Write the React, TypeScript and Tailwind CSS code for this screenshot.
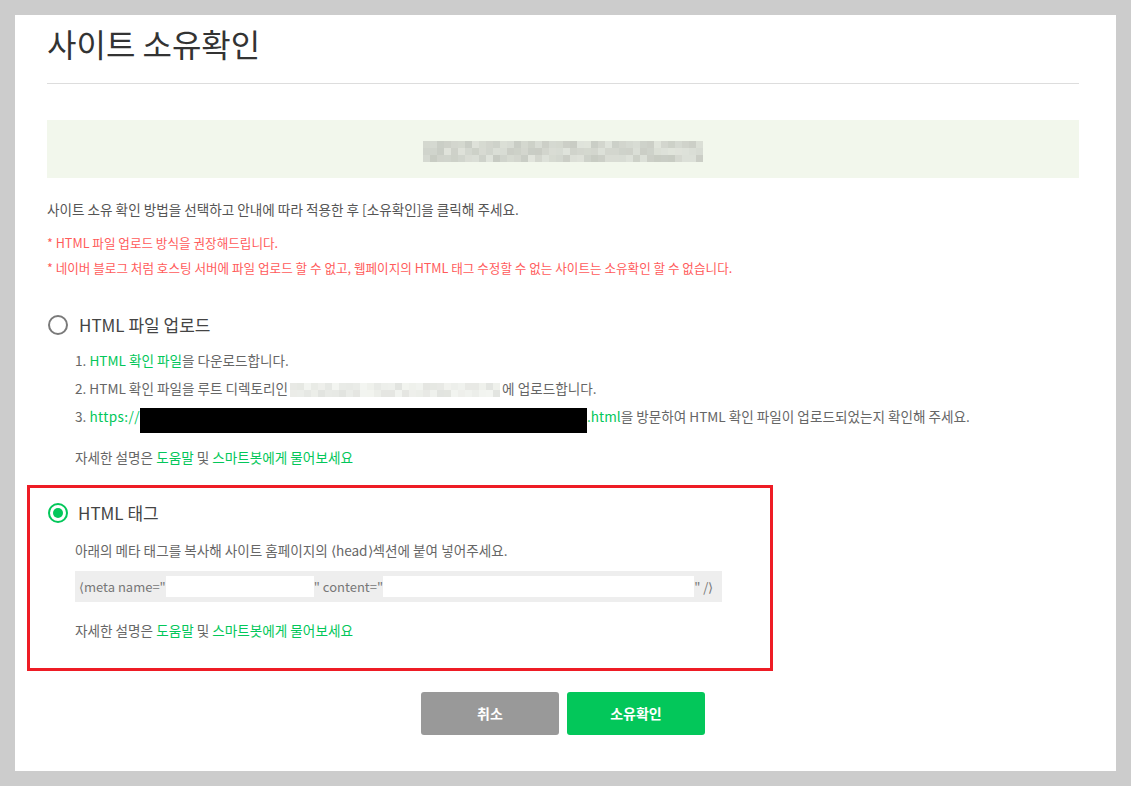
import React, { FC } from 'react'

const KR = { fontFamily: '"Noto Sans CJK KR", "Noto Sans", sans-serif' }

// pixelated mosaic standing in for blurred-out text
const Mosaic: FC<{ cols: number; rows: number; cell: number; base: number; spread: number; seed: number }> = ({
  cols,
  rows,
  cell,
  base,
  spread,
  seed
}) => {
  let s = seed
  const rand = () => {
    s = (s * 9301 + 49297) % 233280
    return s / 233280
  }
  const cells: number[][] = []
  for (let r = 0; r < rows; r++) {
    const row: number[] = []
    for (let c = 0; c < cols; c++) row.push(Math.round(base + (rand() - 0.5) * spread))
    cells.push(row)
  }
  return (
    <span className="inline-flex flex-col align-middle">
      {cells.map((row, r) => (
        <span key={r} className="flex">
          {row.map((v, c) => (
            <span
              key={c}
              style={{ width: cell, height: cell, backgroundColor: `rgb(${v},${v + 3},${v - 4})` }}
            />
          ))}
        </span>
      ))}
    </span>
  )
}

const Radio: FC<{ checked?: boolean }> = ({ checked }) =>
  checked ? (
    <span className="w-[20px] h-[20px] rounded-full border-2 border-[#03c75a] flex items-center justify-center">
      <span className="w-[10px] h-[10px] rounded-full bg-[#03c75a]" />
    </span>
  ) : (
    <span className="w-[20px] h-[20px] rounded-full border-2 border-[#7a7a7a]" />
  )

const Help: FC = () => (
  <p className="text-[13.6px] leading-[20px] text-[#666]">
    자세한 설명은 <span className="text-[#03c75a]">도움말</span> 및{' '}
    <span className="text-[#03c75a]">스마트봇에게 물어보세요</span>
  </p>
)

const App: FC = () => {
  return (
    <div className="min-h-screen bg-[#cccccc] p-[15px]" style={KR}>
      <div className="bg-white h-[756px] pt-[8px] pl-[32px] pr-[37px]">
        <h1 className="text-[32px] leading-[40px] text-[#333]">사이트 소유확인</h1>
        <div className="mt-[20px] h-px bg-[#dddddd]" />

        <div className="mt-[36px] h-[58px] bg-[#f2f7ec] flex items-center justify-center">
          <span className="opacity-70">
            <Mosaic cols={40} rows={3} cell={7} base={200} spread={36} seed={7} />
          </span>
        </div>

        <p className="mt-[21px] text-[13.6px] leading-[20px] text-[#555]">
          사이트 소유 확인 방법을 선택하고 안내에 따라 적용한 후 [소유확인]을 클릭해 주세요.
        </p>
        <div className="mt-[11px] text-[12.6px] leading-[25px] text-[#ff5b5b]">
          <p>* HTML 파일 업로드 방식을 권장해드립니다.</p>
          <p>* 네이버 블로그 처럼 호스팅 서버에 파일 업로드 할 수 없고, 웹페이지의 HTML 태그 수정할 수 없는 사이트는 소유확인 할 수 없습니다.</p>
        </div>

        <div className="mt-[33px] flex items-center gap-[11px] h-[24px] pl-px">
          <Radio />
          <span className="text-[17px] text-[#444]">HTML 파일 업로드</span>
        </div>
        <ol className="mt-[9px] pl-[28px] text-[13.6px] leading-[28px] text-[#666]">
          <li>
            1. <span className="text-[#03c75a]">HTML 확인 파일</span>을 다운로드합니다.
          </li>
          <li className="flex items-center h-[28px]">
            <span>2. HTML 확인 파일을 루트 디렉토리인</span>
            <span className="mx-[2px] opacity-60">
              <Mosaic cols={30} rows={2} cell={7} base={222} spread={30} seed={3} />
            </span>
            <span>에 업로드합니다.</span>
          </li>
          <li className="flex items-start h-[28px] whitespace-nowrap">
            <span>
              3. <span className="text-[#03c75a] tracking-[0.4px]">https://</span>
            </span>
            <span className="shrink-0 w-[447px] h-[25px] bg-black mt-[6px]" />
            <span>
              <span className="text-[#03c75a]">.html</span>을 방문하여 HTML 확인 파일이 업로드되었는지 확인해 주세요.
            </span>
          </li>
        </ol>
        <div className="mt-[17px] pl-[28px]">
          <Help />
        </div>

        <div className="mt-[18px] ml-[-20px] w-[746px] h-[186px] border-[3px] border-[#ee1c25] pt-[13px] pl-[18px]">
          <div className="flex items-center gap-[10px] h-[24px]">
            <Radio checked />
            <span className="text-[17px] text-[#444]">HTML 태그</span>
          </div>
          <div className="pl-[27px]">
            <p className="mt-[15px] text-[13.6px] leading-[20px] text-[#666]">
              아래의 메타 태그를 복사해 사이트 홈페이지의 ⟨head⟩섹션에 붙여 넣어주세요.
            </p>
            <div className="mt-[11px] w-[647px] h-[31px] bg-[#eeeeee] flex items-center pl-[4px] text-[13px] text-[#777] whitespace-nowrap">
              <span className="shrink-0">⟨meta name="</span>
              <span className="shrink-0 w-[148px] h-[21px] bg-white" />
              <span className="shrink-0">" content="</span>
              <span className="shrink-0 w-[311px] h-[21px] bg-white" />
              <span className="shrink-0">" /⟩</span>
            </div>
            <div className="mt-[18px]">
              <Help />
            </div>
          </div>
        </div>

        <div className="mt-[21px] flex justify-center gap-[8px]">
          <button className="w-[138px] h-[43px] rounded-[3px] bg-[#999999] text-white text-[14px] font-bold">
            취소
          </button>
          <button className="w-[138px] h-[43px] rounded-[3px] bg-[#03c75a] text-white text-[14px] font-bold">
            소유확인
          </button>
        </div>
      </div>
    </div>
  )
}

export default App
